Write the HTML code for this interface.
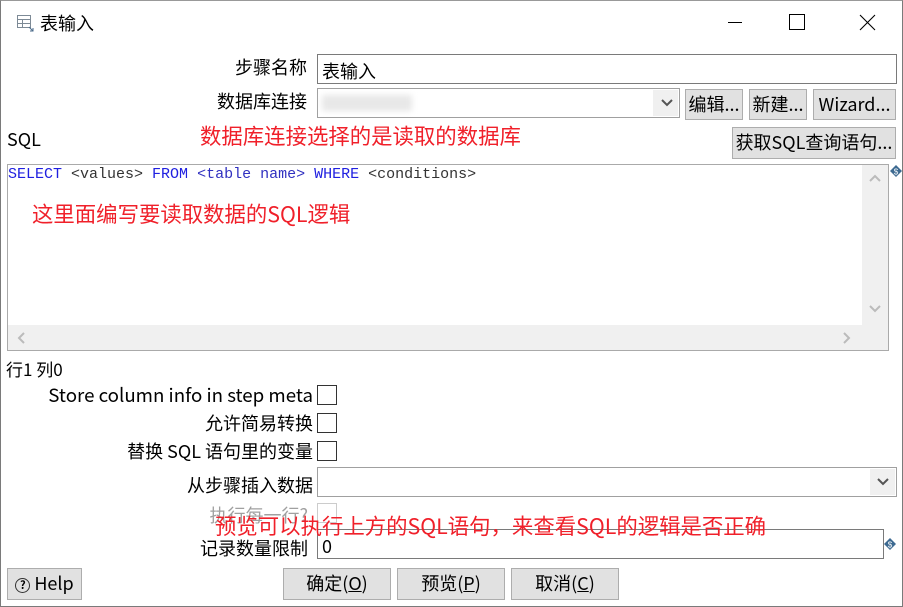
<!DOCTYPE html>
<html><head><meta charset="utf-8"><style>
*{margin:0;padding:0;box-sizing:border-box}
body{width:903px;height:607px;background:#fff;position:relative;overflow:hidden;font-family:"Microsoft YaHei","Noto Sans CJK SC","Liberation Sans",sans-serif;font-size:17px;color:#000}
.a{position:absolute;white-space:nowrap}
.lbl{position:absolute;right:596px;text-align:right;white-space:nowrap;line-height:22px;font-size:18px}
.box{position:absolute;border:1px solid #a0a0a0;background:#fff}
.btn{position:absolute;background:#e1e1e1;border:1px solid #adadad;text-align:center;line-height:29px;font-size:18px}
.cb{position:absolute;width:20px;height:20px;border:1px solid #333;background:#fff;left:317px}
.red{position:absolute;color:#f0202a;font-size:21.4px;white-space:nowrap;line-height:24px}
.dd{position:absolute;width:25px;background:#f0f0f0}
</style></head><body>
<div class="a" style="left:0;top:0;width:903px;height:607px;border:1px solid #7a7a7a;border-top:1px solid #999"></div>
<svg class="a" style="left:16px;top:14px" width="20" height="20" viewBox="0 0 20 20"><rect x="1.5" y="1.5" width="13" height="12" fill="none" stroke="#7d8a96"/><line x1="1.5" y1="5.5" x2="14.5" y2="5.5" stroke="#7d8a96"/><line x1="1.5" y1="9.5" x2="14.5" y2="9.5" stroke="#7d8a96"/><line x1="6.5" y1="5.5" x2="6.5" y2="13.5" stroke="#7d8a96"/><path d="M13 13l4 4m0-3v3h-3" stroke="#4a6a8a" fill="none"/></svg>
<div class="a" style="left:40px;top:10px;font-size:18px">表输入</div>
<div class="a" style="left:728px;top:22px;width:14px;height:1px;background:#000"></div>
<div class="a" style="left:789px;top:14px;width:16px;height:16px;border:1px solid #000"></div>
<svg class="a" style="left:859px;top:14px" width="18" height="18"><path d="M1 1L16 16M16 1L1 16" stroke="#000" stroke-width="1.1"/></svg>

<div class="lbl" style="top:56px">步骤名称</div>
<div class="box" style="left:317px;top:54px;width:580px;height:30px;border-color:#7a7a7a"><span style="position:absolute;left:4px;top:3px;font-size:18px">表输入</span></div>
<div class="lbl" style="top:90px">数据库连接</div>
<div class="box" style="left:317px;top:88px;width:363px;height:30px"><div style="position:absolute;left:4px;top:6px;width:90px;height:16px;background:#e8e8e8;filter:blur(3px)"></div><div class="dd" style="right:1px;top:1px;height:26px"></div><svg class="a" style="right:5px;top:9px" width="14" height="10"><path d="M2 2l5 5 5-5" stroke="#555" stroke-width="2" fill="none"/></svg></div>
<div class="btn" style="left:685px;top:89px;width:58px;height:31px">编辑...</div>
<div class="btn" style="left:749px;top:89px;width:58px;height:31px">新建...</div>
<div class="btn" style="left:813px;top:89px;width:83px;height:31px">Wizard...</div>
<div class="a" style="left:7px;top:126px;font-size:18px">SQL</div>
<div class="red" style="left:200px;top:124px">数据库连接选择的是读取的数据库</div>
<div class="btn" style="left:732px;top:127px;width:164px;height:32px">获取SQL查询语句...</div>

<div class="box" style="left:7px;top:164px;width:882px;height:187px;border-color:#aaa">
<div class="a" style="left:0;top:1px;font-family:'Liberation Mono',monospace;font-size:15px;color:#333"><span style="color:#2020e0">SELECT</span> &lt;values&gt; <span style="color:#2020e0">FROM</span> <span style="color:#3030c0">&lt;table name&gt;</span> <span style="color:#2020e0">WHERE</span> &lt;conditions&gt;</div>
<div class="a" style="left:854px;top:0;width:26px;height:160px;background:#f0f0f0"></div>
<svg class="a" style="left:860px;top:8px" width="14" height="10"><path d="M2 8l5-5 5 5" stroke="#bbb" stroke-width="2" fill="none"/></svg>
<svg class="a" style="left:860px;top:139px" width="14" height="10"><path d="M2 2l5 5 5-5" stroke="#bbb" stroke-width="2" fill="none"/></svg>
<div class="a" style="left:0;top:160px;width:880px;height:25px;background:#f0f0f0"></div>
<svg class="a" style="left:8px;top:166px" width="10" height="14"><path d="M8 2L3 7l5 5" stroke="#bbb" stroke-width="2" fill="none"/></svg>
<svg class="a" style="left:834px;top:166px" width="10" height="14"><path d="M2 2l5 5-5 5" stroke="#bbb" stroke-width="2" fill="none"/></svg>
</div>
<div class="red" style="left:32px;top:202px">这里面编写要读取数据的SQL逻辑</div>
<svg class="a" style="left:889px;top:164px" width="14" height="14"><path d="M7 1l6 6-6 6-6-6z" fill="#3d6a91"/><text x="7" y="10.5" font-size="8" fill="#fff" text-anchor="middle" font-family="Liberation Sans">$</text></svg>

<div class="a" style="left:6px;top:356px;font-size:17px">行1 列0</div>
<div class="lbl" style="top:384px;right:590px;font-size:18.7px">Store column info in step meta</div>
<div class="cb" style="top:385px"></div>
<div class="lbl" style="top:412px;right:590px">允许简易转换</div>
<div class="cb" style="top:413px"></div>
<div class="lbl" style="top:440px;right:590px">替换 SQL 语句里的变量</div>
<div class="cb" style="top:441px"></div>
<div class="lbl" style="top:474px;right:590px">从步骤插入数据</div>
<div class="box" style="left:317px;top:467px;width:580px;height:30px"><div class="dd" style="right:1px;top:1px;height:26px"></div><svg class="a" style="right:6px;top:9px" width="14" height="10"><path d="M2 2l5 5 5-5" stroke="#555" stroke-width="2" fill="none"/></svg></div>
<div class="lbl" style="top:504px;color:#a0a0a0;right:595px">执行每一行?</div>
<div class="cb" style="top:503px;border-color:#ccc"></div>
<div class="box" style="left:317px;top:529px;width:567px;height:30px;border-color:#7a7a7a;background:transparent"><span style="position:absolute;left:4px;top:3px;font-size:18px">0</span></div>
<div class="red" style="left:215px;top:514px">预览可以执行上方的SQL语句，来查看SQL的逻辑是否正确</div>
<div class="lbl" style="top:537px;right:595px">记录数量限制</div>
<svg class="a" style="left:883px;top:537px" width="14" height="14"><path d="M7 1l6 6-6 6-6-6z" fill="#3d6a91"/><text x="7" y="10.5" font-size="8" fill="#fff" text-anchor="middle" font-family="Liberation Sans">$</text></svg>

<div class="btn" style="left:7px;top:568px;width:75px;height:32px"><span style="display:inline-block;width:15px;height:15px;border:1.5px solid #333;border-radius:50%;font-size:11px;line-height:12px;vertical-align:1px;font-weight:bold">?</span> Help</div>
<div class="btn" style="left:283px;top:568px;width:108px;height:32px">确定(<u>O</u>)</div>
<div class="btn" style="left:397px;top:568px;width:108px;height:32px">预览(<u>P</u>)</div>
<div class="btn" style="left:511px;top:568px;width:108px;height:32px">取消(<u>C</u>)</div>
</body></html>
